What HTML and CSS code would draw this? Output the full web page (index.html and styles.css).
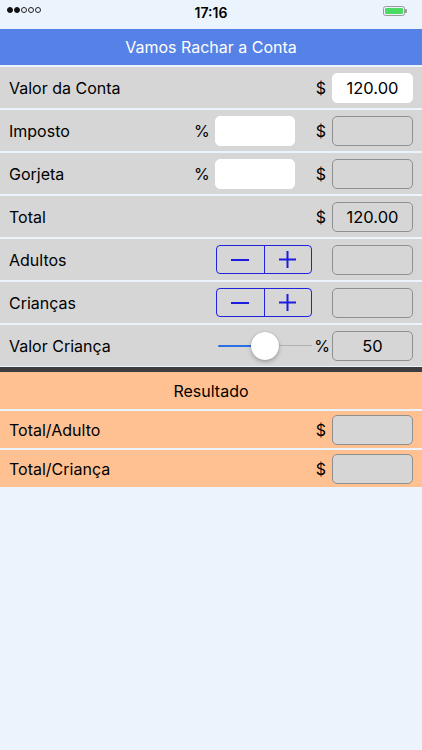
FILE: index.html
```html
<!DOCTYPE html>
<html lang="pt">
<head>
<meta charset="utf-8">
<title>Vamos Rachar a Conta</title>
<link rel="stylesheet" href="styles.css">
</head>
<body>
<div class="status">
  <div class="signal"><span class="dot on"></span><span class="dot on"></span><span class="dot"></span><span class="dot"></span><span class="dot"></span></div>
  <div class="time">17:16</div>
  <div class="battery"><div class="bat-body"><div class="bat-fill"></div></div><div class="bat-nub"></div></div>
</div>
<div class="navbar">Vamos Rachar a Conta</div>
<div class="rows">
  <div class="row">
    <span class="label">Valor da Conta</span>
    <span class="sym">$</span>
    <span class="field white">120.00</span>
  </div>
  <div class="row">
    <span class="label">Imposto</span>
    <span class="sym perc">%</span>
    <span class="field white mid"></span>
    <span class="sym sym2">$</span>
    <span class="field"></span>
  </div>
  <div class="row">
    <span class="label">Gorjeta</span>
    <span class="sym perc">%</span>
    <span class="field white mid"></span>
    <span class="sym sym2">$</span>
    <span class="field"></span>
  </div>
  <div class="row">
    <span class="label">Total</span>
    <span class="sym">$</span>
    <span class="field">120.00</span>
  </div>
  <div class="row">
    <span class="label">Adultos</span>
    <div class="stepper"><span class="step"><svg width="18" height="2" viewBox="0 0 18 2"><rect width="18" height="2" fill="currentColor"/></svg></span><span class="step right"><svg width="17" height="17" viewBox="0 0 17 17"><rect x="0" y="7.5" width="17" height="2" fill="currentColor"/><rect x="7.5" y="0" width="2" height="17" fill="currentColor"/></svg></span></div>
    <span class="field"></span>
  </div>
  <div class="row">
    <span class="label">Crianças</span>
    <div class="stepper"><span class="step"><svg width="18" height="2" viewBox="0 0 18 2"><rect width="18" height="2" fill="currentColor"/></svg></span><span class="step right"><svg width="17" height="17" viewBox="0 0 17 17"><rect x="0" y="7.5" width="17" height="2" fill="currentColor"/><rect x="7.5" y="0" width="2" height="17" fill="currentColor"/></svg></span></div>
    <span class="field"></span>
  </div>
  <div class="row">
    <span class="label">Valor Criança</span>
    <div class="slider">
      <div class="track-min"></div>
      <div class="track-max"></div>
      <div class="thumb"></div>
    </div>
    <span class="sym pct">%</span>
    <span class="field">50</span>
  </div>
</div>
<div class="divider"></div>
<div class="results">
  <div class="row res head">Resultado</div>
  <div class="row res">
    <span class="label">Total/Adulto</span>
    <span class="sym">$</span>
    <span class="field gray"></span>
  </div>
  <div class="row res">
    <span class="label">Total/Criança</span>
    <span class="sym">$</span>
    <span class="field gray"></span>
  </div>
</div>
</body>
</html>
```
FILE: styles.css
```css
html, body {
  margin: 0;
  padding: 0;
  background: #ebf4fd;
  font-family: Inter, Roboto, "Liberation Sans", Arial, sans-serif;
  color: #000;
}
.status {
  height: 29px;
  display: flex;
  align-items: center;
  justify-content: space-between;
  padding: 0 15px 0 7px;
  position: relative;
}
.signal { display: flex; gap: 1px; margin-top: -9px; }
.dot {
  width: 6px; height: 6px; border-radius: 50%;
  border: 0.8px solid #222; box-sizing: border-box;
}
.dot.on { background: #111; border-color: #111; }
.time {
  position: absolute; left: 0; right: 0; top: 4px;
  text-align: center; font-weight: 600; font-size: 14px;
}
.battery { display: flex; align-items: center; margin-top: -8px; }
.bat-body {
  width: 22px; height: 10px; border: 1px solid #9a9a9a;
  border-radius: 2.5px; box-sizing: border-box; padding: 1px;
}
.bat-fill { width: 100%; height: 100%; background: #4cd964; border-radius: 1px; }
.bat-nub { width: 2px; height: 4px; background: #9a9a9a; border-radius: 0 1px 1px 0; }
.navbar {
  height: 36px;
  background: #5681e6;
  color: #fff;
  font-size: 16px;
  display: flex;
  align-items: center;
  justify-content: center;
  margin-bottom: 2px;
}
.rows { display: flex; flex-direction: column; gap: 2px; }
.row {
  height: 41px;
  background: #d6d6d6;
  display: flex;
  align-items: center;
  padding: 0 9px;
  font-size: 16px;
}
.label { flex: 1; }
.sym { margin-right: 6px; }
.perc { margin-right: 4px; }
.sym2 { margin-left: 21px; }
.field {
  width: 81px;
  height: 30px;
  box-sizing: border-box;
  border: 1px solid #8f8f8f;
  border-radius: 5px;
  display: flex;
  align-items: center;
  justify-content: center;
  font-size: 16.5px;
}
.field.white { background: #fff; border-color: #fff; }
.field.gray { background: #d6d6d6; }
.field.mid { width: 80px; margin-left: 1px; }
.stepper {
  width: 96px; height: 29px; box-sizing: border-box;
  border: 1px solid #2222dd; border-radius: 4px;
  display: flex; color: #1c1ce0; margin-right: 20px;
}
.step { flex: 1; display: flex; align-items: center; justify-content: center; }
.step.right { border-left: 1px solid #2222dd; }
.slider { width: 94px; height: 30px; position: relative; margin-right: 2px; }
.track-min {
  position: absolute; left: 0; top: 14px; width: 47px; height: 2px;
  background: #2b6fe3; border-radius: 1px;
}
.track-max {
  position: absolute; left: 47px; right: 0; top: 14.5px; height: 1px;
  background: #b0b0b0;
}
.thumb {
  position: absolute; left: 33px; top: 1px; width: 28px; height: 28px;
  border-radius: 50%; background: #fff;
  box-shadow: 0 2px 4px rgba(0,0,0,0.25), 0 0 1px rgba(0,0,0,0.3);
}
.pct { margin-right: 2px; }
.divider {
  height: 5px;
  background: #3d3d3d;
  margin-top: 1px;
}
.results { display: flex; flex-direction: column; gap: 2px; }
.row.res { background: #ffc192; height: 37px; }
.row.head { justify-content: center; }
```
